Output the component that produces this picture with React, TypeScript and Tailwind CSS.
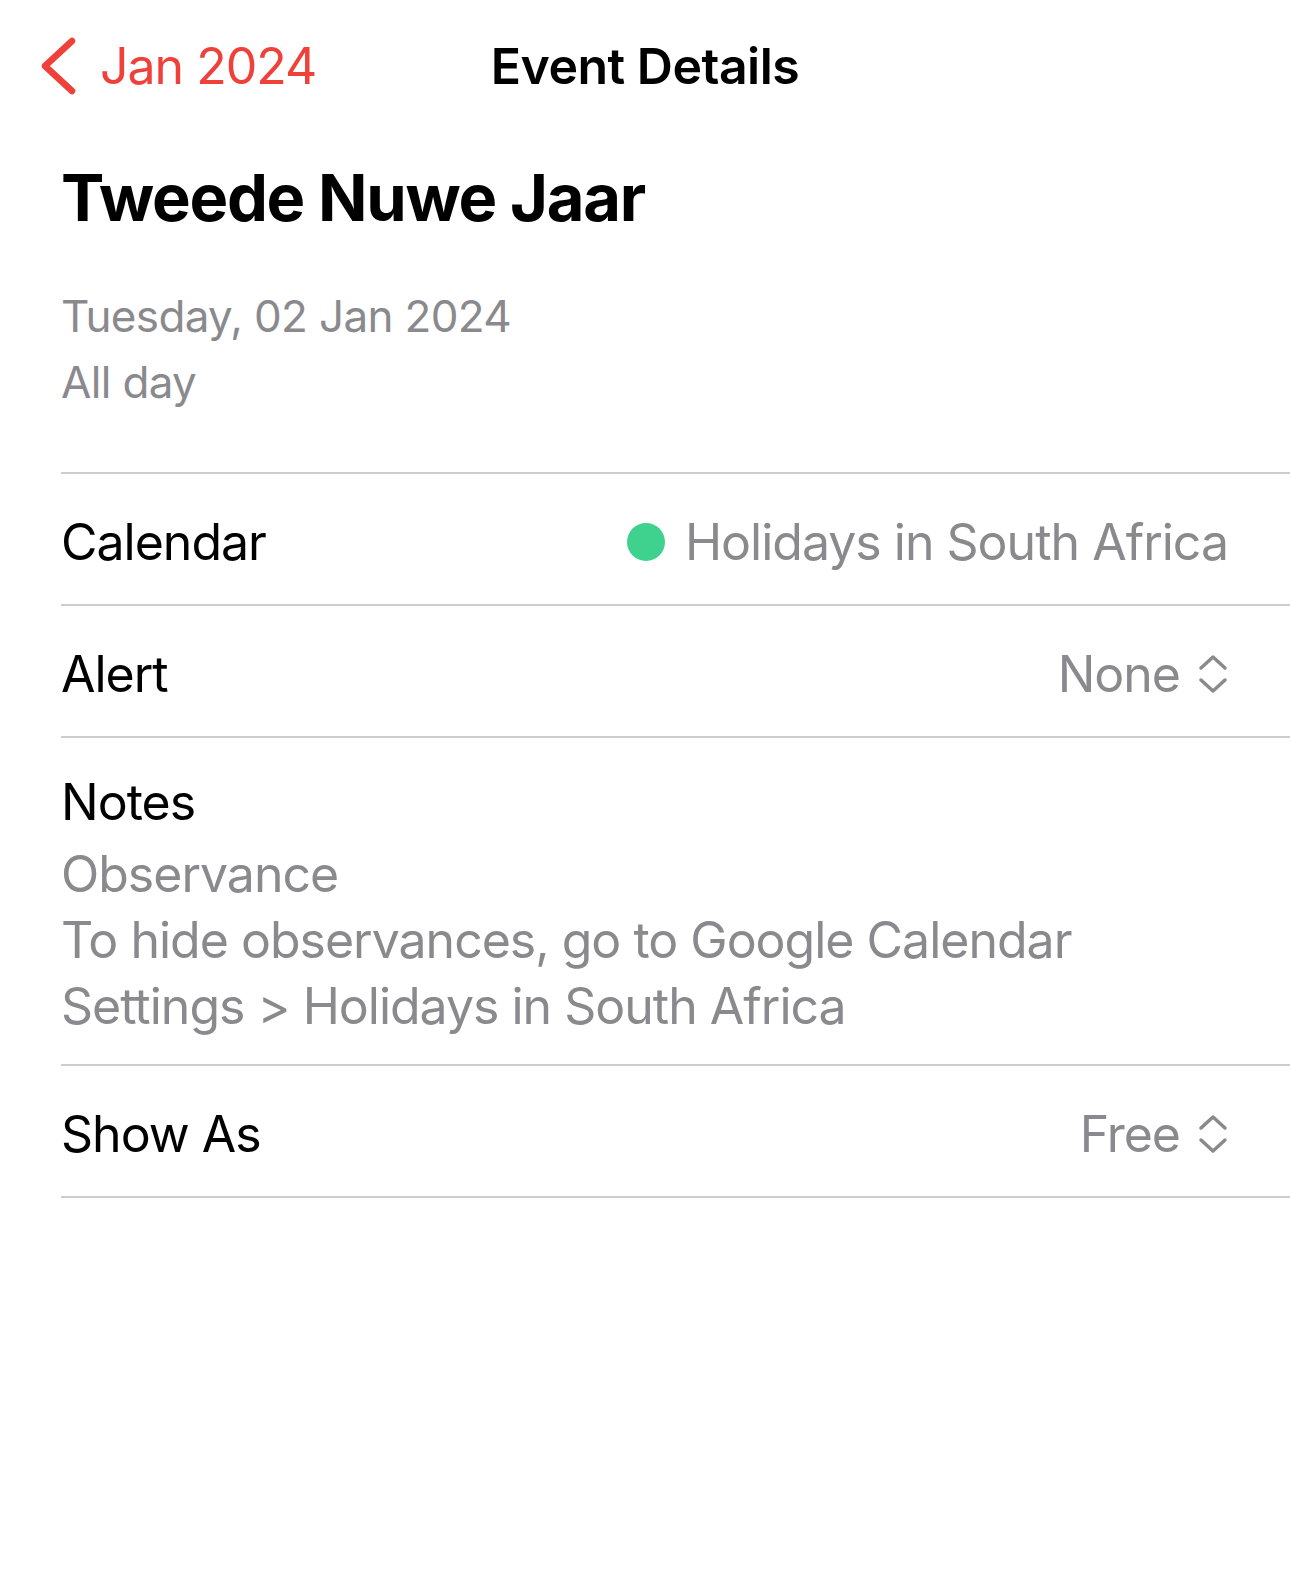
import React from "react";

const font = { fontFamily: "Inter, 'Noto Sans', sans-serif" };

function UpDown() {
  return (
    <svg width="30" height="40" viewBox="0 0 30 40" fill="none" stroke="#8a8a8e" strokeWidth="3.5" strokeLinecap="round" strokeLinejoin="round">
      <polyline points="3,14 15,3 27,14" />
      <polyline points="3,26 15,37 27,26" />
    </svg>
  );
}

function Row({ label, children }: { label: string; children?: React.ReactNode }) {
  return (
    <div className="flex h-[132px] items-center justify-between border-b-2 border-[#cdcdcf] pr-[62px] pt-[6px]">
      <span className="text-[50px] tracking-[-0.02em] text-black">{label}</span>
      <div className="flex items-center text-[50px] tracking-[-0.02em] text-[#8a8a8e]">{children}</div>
    </div>
  );
}

export default function App() {
  return (
    <div className="h-[1582px] w-[1290px] bg-white" style={font}>
      <div className="grid h-[132px] grid-cols-[1fr_auto_1fr] items-center">
        <div className="flex items-center pl-[40px]">
          <svg width="36" height="58" viewBox="0 0 36 58" fill="none" stroke="#f0403a" strokeWidth="6.5" strokeLinecap="round" strokeLinejoin="round">
            <polyline points="32,4 5,29 32,54" />
          </svg>
          <span className="ml-[24px] text-[50px] tracking-[-0.02em] text-[#f0403a]">Jan 2024</span>
        </div>
        <div className="text-[50px] font-semibold tracking-[-0.01em] text-black">Event Details</div>
        <div />
      </div>
      <div className="pl-[61px]">
        <h1 className="mt-[26px] text-[65px] font-bold leading-[80px] tracking-[-0.02em] text-black">Tweede Nuwe Jaar</h1>
        <div className="mt-[45px] text-[44px] leading-[66px] tracking-[-0.015em] text-[#8a8a8e]">
          <div>Tuesday, 02 Jan 2024</div>
          <div>All day</div>
        </div>
        <div className="mt-[57px] border-t-2 border-[#cdcdcf]">
          <Row label="Calendar">
            <span className="mr-[20px] inline-block h-[38px] w-[38px] rounded-full bg-[#3fd28f]" />
            <span>Holidays in South Africa</span>
          </Row>
          <Row label="Alert">
            <span className="mr-[18px]">None</span>
            <UpDown />
          </Row>
          <div className="border-b-2 border-[#cdcdcf] pb-[25px] pt-[31px] text-[50px] leading-[66px] tracking-[-0.02em]">
            <div className="text-black">Notes</div>
            <div className="mt-[6px] text-[#8a8a8e]">Observance</div>
            <div className="text-[#8a8a8e]">To hide observances, go to Google Calendar</div>
            <div className="text-[#8a8a8e]">Settings &gt; Holidays in South Africa</div>
          </div>
          <Row label="Show As">
            <span className="mr-[18px]">Free</span>
            <UpDown />
          </Row>
        </div>
      </div>
    </div>
  );
}
